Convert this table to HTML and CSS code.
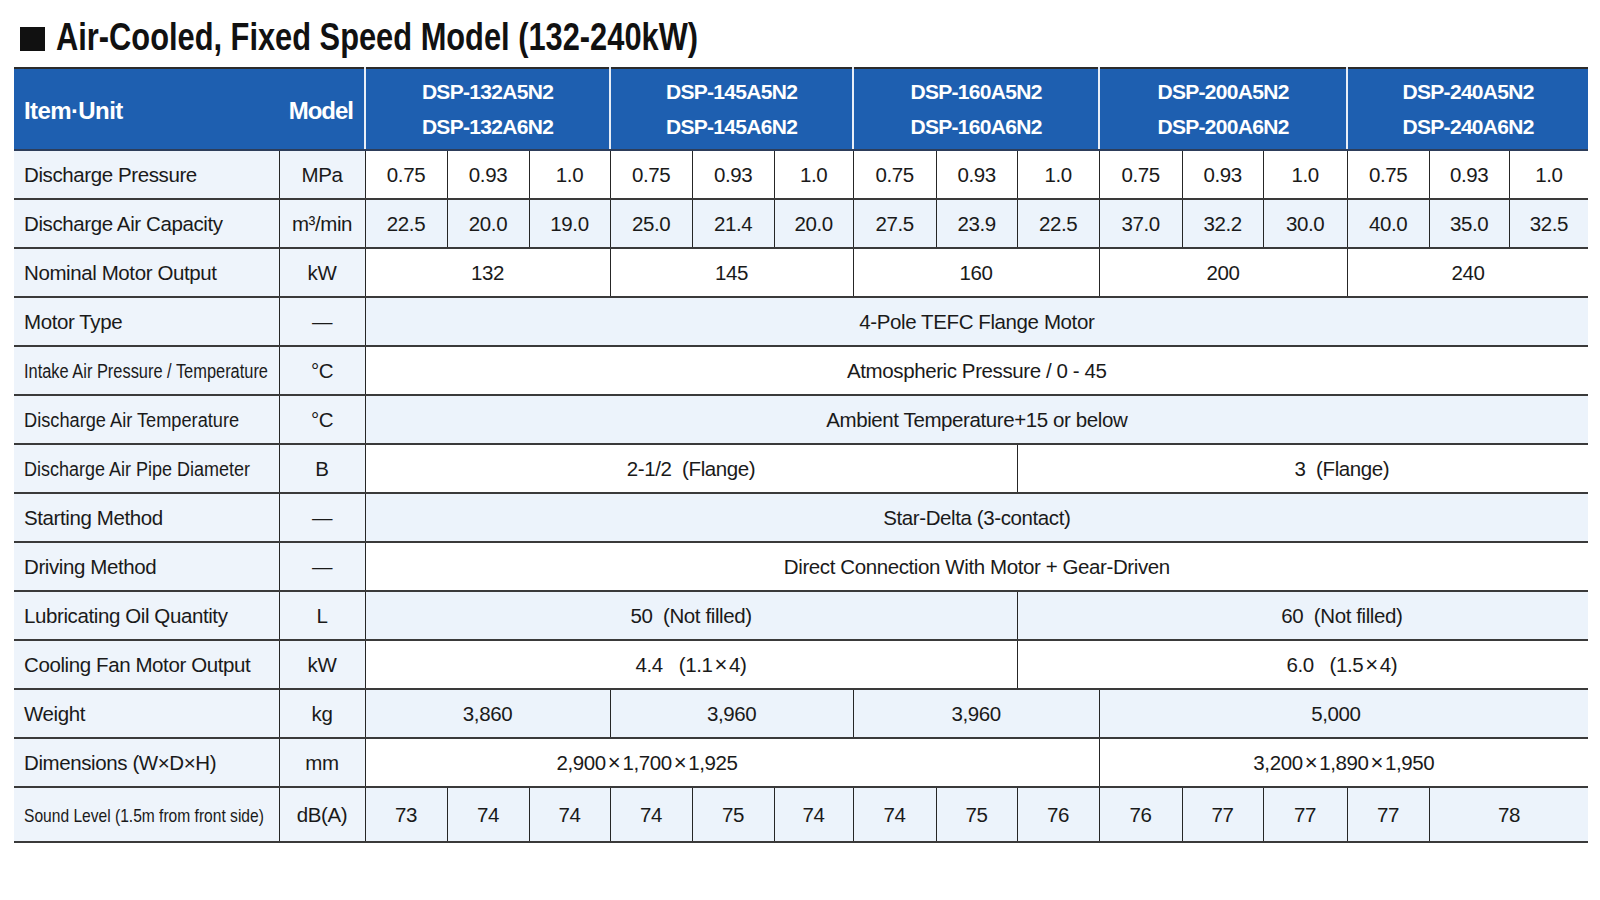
FILE: index.html
```html
<!DOCTYPE html>
<html lang="en">
<head>
<meta charset="utf-8">
<title>Air-Cooled, Fixed Speed Model (132-240kW)</title>
<link rel="stylesheet" href="styles.css">
</head>
<body>
<h1 class="title"><span class="sq"></span><span class="title-text">Air-Cooled, Fixed Speed Model (132-240kW)</span></h1>
<table class="spec">
  <colgroup>
    <col class="c-item"><col class="c-unit">
    <col class="w82"><col class="w82"><col class="w81">
    <col class="w82"><col class="w82"><col class="w79">
    <col class="w83"><col class="w81"><col class="w82">
    <col class="w83"><col class="w81"><col class="w84">
    <col class="w82"><col class="w80"><col class="w79">
  </colgroup>
  <thead>
    <tr class="head">
      <th class="h-item">Item·Unit</th>
      <th class="h-model">Model</th>
      <th colspan="3" class="h-grp">DSP-132A5N2<br>DSP-132A6N2</th>
      <th colspan="3" class="h-grp">DSP-145A5N2<br>DSP-145A6N2</th>
      <th colspan="3" class="h-grp">DSP-160A5N2<br>DSP-160A6N2</th>
      <th colspan="3" class="h-grp">DSP-200A5N2<br>DSP-200A6N2</th>
      <th colspan="3" class="h-grp">DSP-240A5N2<br>DSP-240A6N2</th>
    </tr>
  </thead>
  <tbody>
    <tr class="odd">
      <td class="item">Discharge Pressure</td><td class="unit">MPa</td>
      <td>0.75</td><td>0.93</td><td>1.0</td>
      <td>0.75</td><td>0.93</td><td>1.0</td>
      <td>0.75</td><td>0.93</td><td>1.0</td>
      <td>0.75</td><td>0.93</td><td>1.0</td>
      <td>0.75</td><td>0.93</td><td>1.0</td>
    </tr>
    <tr class="even">
      <td class="item">Discharge Air Capacity</td><td class="unit">m³/min</td>
      <td>22.5</td><td>20.0</td><td>19.0</td>
      <td>25.0</td><td>21.4</td><td>20.0</td>
      <td>27.5</td><td>23.9</td><td>22.5</td>
      <td>37.0</td><td>32.2</td><td>30.0</td>
      <td>40.0</td><td>35.0</td><td>32.5</td>
    </tr>
    <tr class="odd">
      <td class="item">Nominal Motor Output</td><td class="unit">kW</td>
      <td colspan="3">132</td><td colspan="3">145</td><td colspan="3">160</td><td colspan="3">200</td><td colspan="3">240</td>
    </tr>
    <tr class="even">
      <td class="item">Motor Type</td><td class="unit">—</td>
      <td colspan="15">4-Pole TEFC Flange Motor</td>
    </tr>
    <tr class="odd">
      <td class="item"><span class="cond k-intake">Intake Air Pressure / Temperature</span></td><td class="unit">°C</td>
      <td colspan="15">Atmospheric Pressure / 0 - 45</td>
    </tr>
    <tr class="even">
      <td class="item"><span class="cond k-dat">Discharge Air Temperature</span></td><td class="unit">°C</td>
      <td colspan="15">Ambient Temperature+15 or below</td>
    </tr>
    <tr class="odd">
      <td class="item"><span class="cond k-pipe">Discharge Air Pipe Diameter</span></td><td class="unit">B</td>
      <td colspan="8">2-1/2 &nbsp;(Flange)</td><td colspan="7" class="shift-r">3 &nbsp;(Flange)</td>
    </tr>
    <tr class="even">
      <td class="item">Starting Method</td><td class="unit">—</td>
      <td colspan="15">Star-Delta (3-contact)</td>
    </tr>
    <tr class="odd">
      <td class="item">Driving Method</td><td class="unit">—</td>
      <td colspan="15">Direct Connection With Motor + Gear-Driven</td>
    </tr>
    <tr class="even">
      <td class="item">Lubricating Oil Quantity</td><td class="unit">L</td>
      <td colspan="8">50 &nbsp;(Not filled)</td><td colspan="7" class="shift-r">60 &nbsp;(Not filled)</td>
    </tr>
    <tr class="odd">
      <td class="item">Cooling Fan Motor Output</td><td class="unit">kW</td>
      <td colspan="8">4.4 &nbsp; (1.1<span class="x">×</span>4)</td><td colspan="7" class="shift-r">6.0 &nbsp; (1.5<span class="x">×</span>4)</td>
    </tr>
    <tr class="even">
      <td class="item">Weight</td><td class="unit">kg</td>
      <td colspan="3">3,860</td><td colspan="3">3,960</td><td colspan="3">3,960</td><td colspan="6" class="shift-l">5,000</td>
    </tr>
    <tr class="odd">
      <td class="item">Dimensions (W×D×H)</td><td class="unit">mm</td>
      <td colspan="9" class="dim-a">2,900<span class="x">×</span>1,700<span class="x">×</span>1,925</td><td colspan="6">3,200<span class="x">×</span>1,890<span class="x">×</span>1,950</td>
    </tr>
    <tr class="even last">
      <td class="item"><span class="cond k-sound">Sound Level (1.5m from front side)</span></td><td class="unit">dB(A)</td>
      <td>73</td><td>74</td><td>74</td>
      <td>74</td><td>75</td><td>74</td>
      <td>74</td><td>75</td><td>76</td>
      <td>76</td><td>77</td><td>77</td>
      <td>77</td><td colspan="2">78</td>
    </tr>
  </tbody>
</table>
</body>
</html>
```

FILE: styles.css
```css
html, body {
  margin: 0;
  padding: 0;
  background: #ffffff;
}

body {
  padding: 14px 0 0 14px;
  font-family: "Liberation Sans", Arial, sans-serif;
  color: #1a1a1a;
}

.title {
  display: flex;
  align-items: center;
  gap: 11px;
  margin: 0 0 7px 6px;
  height: 46px;
  font-size: 39px;
  font-weight: bold;
  color: #111;
  white-space: nowrap;
}

.sq {
  width: 25px;
  height: 24px;
  margin-top: 3px;
  background: #111;
  flex: none;
}

.title-text {
  display: inline-block;
  transform: scaleX(0.79);
  transform-origin: left center;
}

.spec {
  border-collapse: collapse;
  table-layout: fixed;
  width: 1574px;
  font-size: 20.5px;
  letter-spacing: -0.4px;
}

.c-item { width: 265px; }
.c-unit { width: 86px; }
.w79 { width: 79px; }
.w80 { width: 80px; }
.w81 { width: 81px; }
.w82 { width: 82px; }
.w83 { width: 83px; }
.w84 { width: 84px; }

.head {
  height: 82px;
  background: #1e5fb0;
  color: #ffffff;
  border-top: 2px solid #2b2b2b;
}

.head th {
  font-weight: bold;
  padding: 0;
  border-bottom: 2px solid #2d3d5a;
}

.h-item {
  text-align: left;
  padding-left: 10px !important;
  padding-top: 4px !important;
  font-size: 24px;
  letter-spacing: -0.6px;
}

.h-model {
  text-align: right;
  padding-right: 11px !important;
  padding-top: 4px !important;
  font-size: 24px;
  letter-spacing: -1px;
}

.h-grp {
  font-size: 21px;
  letter-spacing: -0.7px;
  line-height: 35.5px;
  text-align: center;
  border-left: 2px solid #e8eef7;
}

.spec td {
  padding: 0;
  text-align: center;
  vertical-align: middle;
  border-bottom: 2px solid #3a3a3a;
  border-left: 1.5px solid #262626;
  white-space: nowrap;
}

.spec tbody tr {
  height: 49px;
}

.spec tbody tr.last {
  height: 55px;
}

.odd td { background: #ffffff; }
.even td { background: #ecf3fb; }

.spec td.item {
  text-align: left;
  padding-left: 10px;
  border-left: none;
  background: #eef4fb;
}

.spec td.unit {
  background: #eef4fb;
}

.spec td.shift-r { padding-left: 78px; }
.spec td.shift-l { padding-right: 16px; }
.spec td.dim-a { padding-right: 170px; }

.x {
  margin: 0 2px;
  font-size: 1.08em;
}

.cond {
  display: inline-block;
  letter-spacing: 0;
  transform-origin: left center;
}

.k-intake { font-size: 20px; transform: scaleX(0.82); }
.k-dat { font-size: 20px; transform: scaleX(0.91); }
.k-pipe { font-size: 20px; transform: scaleX(0.9); }
.k-sound { font-size: 19px; transform: scaleX(0.82); }
```
